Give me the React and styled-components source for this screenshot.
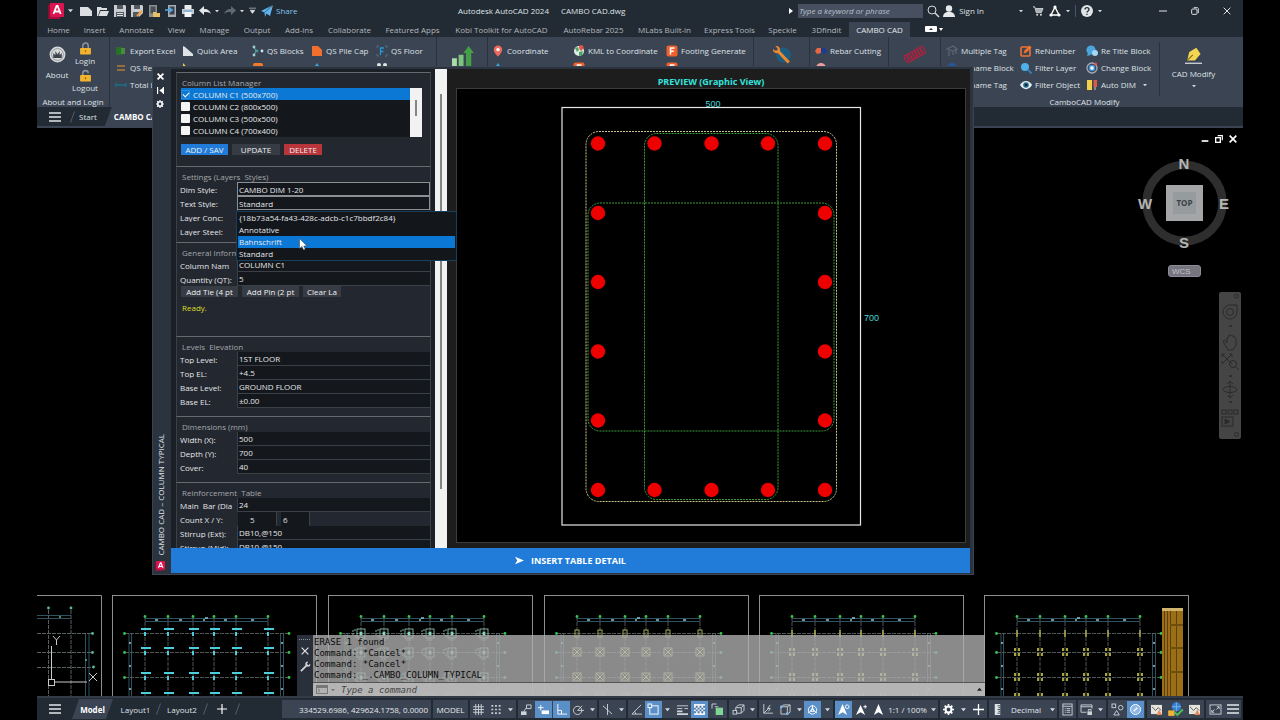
import React from "react";
import styled, { createGlobalStyle, css } from "styled-components";

const c = {
  bar: "#222a33",
  ribbon: "#3b4453",
  line: "#2a313c",
  text: "#dfe2e6",
  muted: "#b2b8bf",
  blue: "#217cd9",
  select: "#0b78d6",
  active: "#5b8fc7",
  field: "#14181d",
  group: "#23272f",
};
const ui = `"Open Sans", "Noto Sans", sans-serif`;

const Global = createGlobalStyle`
  * { box-sizing: border-box; }
  body { margin: 0; background: #000; font-family: ${ui}; font-size: 8px; color: ${c.text}; }
  button, input, select { font: inherit; color: inherit; }
`;

/* ---------- shared ---------- */
const Page = styled.div`
  position: relative;
  min-height: 100vh;
  display: flex;
  flex-direction: column;
  padding: 0 37px;
  background: #000;
`;
const Bare = styled.button`
  display: inline-flex;
  align-items: center;
  justify-content: center;
  padding: 0;
  border: 0;
  background: none;
  color: inherit;
  white-space: nowrap;
`;
const Svg = styled.svg`
  display: block;
  flex: none;
  overflow: visible;
`;
const Glyph = ({ s = 12, children, ...rest }) => (
  <Svg width={s} height={s} viewBox="0 0 12 12" fill="none" stroke="none" aria-hidden="true" {...rest}>
    {children}
  </Svg>
);
const Caret = ({ fill = "#d5d9de", s = 5 }) => (
  <Svg width={s} height={s} viewBox="0 0 6 6" aria-hidden="true">
    <path d="M0 1.5h6L3 5z" fill={fill} />
  </Svg>
);

/* ---------- title bar ---------- */
const TitleBar = styled.header`
  display: flex;
  align-items: center;
  height: 21px;
  background: ${c.bar};
`;
const QuickBar = styled.div`
  display: flex;
  align-items: center;
  width: 421px;
  padding-left: 11px;
`;
const Quick = styled(Bare)`
  width: ${(p) => p.$w || 17}px;
  height: 20px;
`;
const Account = styled(Quick)`
  justify-content: flex-end;
  padding-right: 10px;
`;
const Share = styled(Bare)`
  gap: 3px;
  margin-left: 2px;
  color: #86c4ee;
`;
const Title = styled.div`
  display: flex;
  gap: 12px;
  flex: 1;
  white-space: nowrap;
`;
const Search = styled.input`
  width: 125px;
  height: 14px;
  margin: 0 4px 0 5px;
  padding: 0 1px;
  border: 0;
  background: #465061;
  font-style: italic;
  &::placeholder { color: #b9c0c9; opacity: 1; }
`;
const TitleTools = styled.div`
  display: flex;
  align-items: center;
  flex: none;
`;
const WindowBtns = styled.div`
  display: flex;
  margin-left: 41px;
`;
const WindowBtn = styled(Bare)`
  width: 32px;
  height: 20px;
`;
const Rule = styled.span`
  width: 1px;
  height: 12px;
  margin: 0 5px;
  background: #4a5462;
`;

/* ---------- ribbon ---------- */
const Tabs = styled.nav`
  display: flex;
  align-items: flex-end;
  height: 16px;
  padding-left: 3px;
  background: ${c.bar};
`;
const Tab = styled(Bare)`
  width: ${(p) => p.$w}px;
  height: 15px;
  color: ${(p) => (p.$on ? "#e4e8ec" : c.muted)};
  background: ${(p) => (p.$on ? c.ribbon : "none")};
`;
const Ribbon = styled.section`
  display: flex;
  height: 70px;
  background: ${c.ribbon};
`;
const Panel = styled.div`
  position: relative;
  display: flex;
  flex-direction: column;
  flex: none;
  width: ${(p) => p.$w}px;
  border-right: ${(p) => (p.$last ? 0 : 1)}px solid ${c.line};
`;
const PanelBody = styled.div`
  display: flex;
  height: 59px;
  padding: 5px 0 0 ${(p) => p.$pad || 0}px;
`;
const PanelTitle = styled.div`
  height: 11px;
  line-height: 11px;
  text-align: center;
  white-space: nowrap;
`;
const Stack = styled.div`
  display: flex;
  flex-direction: column;
  width: ${(p) => p.$w}px;
`;
const Tool = styled(Bare)`
  justify-content: flex-start;
  gap: 3px;
  height: 17px;
`;
const BigTool = styled(Bare)`
  flex-direction: column;
  justify-content: flex-start;
  gap: ${(p) => p.$gap || 0}px;
  width: ${(p) => p.$w}px;
  padding-top: ${(p) => p.$top || 0}px;
  line-height: 12px;
`;
const LockTool = styled(BigTool)`
  width: 16px;
  height: 27px;
`;
const ModifyTool = styled(BigTool)`
  border-left: 1px solid ${c.line};
`;

const FileTabs = styled.nav`
  display: flex;
  align-items: center;
  height: 21px;
  border-bottom: 2px solid ${c.ribbon};
  background: ${c.bar};
`;
const FileTab = styled(Bare)`
  height: 19px;
  padding: 0 8px 0 6px;
  ${(p) => p.$on && css`
    padding: 0 14px 0 9px;
    background: ${c.ribbon};
    color: #fff;
    font-weight: 700;
    clip-path: polygon(7px 0, 100% 0, 100% 100%, 0 100%);
  `}
`;
const MenuBtn = styled(Bare)`
  width: 35px;
  height: 19px;
`;

const Lines = ({ color = "#e4e8ec" }) => (
  <Glyph><path d="M0 2h12M0 6h12M0 10h12" stroke={color} strokeWidth="1.4" /></Glyph>
);
const Slash = styled.i`
  width: 1px;
  height: 12px;
  background: #525b68;
  transform: rotate(20deg);
`;

/* ---------- drawing canvas ---------- */
const Canvas = styled.main`
  position: relative;
  flex: 1;
  min-height: 568px;
  background: #000;
  overflow: hidden;
`;
const Plans = styled.svg`
  position: absolute;
  left: 0;
  bottom: 0;
`;
const ViewTools = styled.div`
  position: absolute;
  top: 4px;
  right: 2px;
  display: flex;
  flex-direction: column;
  align-items: flex-end;
`;
const DocButtons = styled.div`
  display: flex;
  padding-right: 1px;
`;
const DocBtn = styled(Bare)`
  width: 14px;
  height: 14px;
`;
const CubeBox = styled.div`
  margin: 6px 10px 11px 0;
`;
const Wcs = styled(Bare)`
  justify-content: flex-start;
  width: 33px;
  height: 12px;
  margin-right: 40px;
  padding-left: 3px;
  border: 1px solid #8c8b9c;
  border-radius: 3px;
  background: #75747f;
  color: #c4c4cc;
  font-family: "Liberation Sans", sans-serif;
`;
const NavBar = styled.div`
  display: flex;
  flex-direction: column;
  align-items: center;
  width: 22px;
  height: 147px;
  margin-top: 15px;
  border-radius: 2px;
  background: #454545;
`;

const Command = styled.section`
  position: absolute;
  left: 260px;
  bottom: 0;
  display: flex;
  width: 688px;
  height: 61px;
`;
const CommandGrip = styled.div`
  display: flex;
  flex-direction: column;
  align-items: center;
  gap: 6px;
  width: 16px;
  padding-top: 3px;
  background: #2a303b;
`;
const CommandMain = styled.div`
  display: flex;
  flex-direction: column;
  flex: 1;
  background: rgba(172, 172, 172, 0.8);
  color: #0a0a0a;
  font-family: "DejaVu Sans Mono", "Liberation Mono", monospace;
  font-size: 9px;
`;
const History = styled.div`
  height: 48px;
  padding: 2px 1px;
  border-bottom: 1px solid #555;
  line-height: 11px;
`;
const Prompt = styled.label`
  display: flex;
  align-items: center;
  gap: 3px;
  flex: 1;
  padding: 0 3px;
  background: rgba(190, 190, 190, 0.8);
`;
const PromptInput = styled.input`
  flex: 1;
  min-width: 0;
  padding: 0 3px;
  border: 0;
  background: none;
  font-style: italic;
  &::placeholder { color: #444; opacity: 1; }
`;

/* ---------- status bar ---------- */
const Status = styled.footer`
  display: flex;
  align-items: center;
  height: 24px;
  border-top: 2px solid #323b47;
  background: ${c.bar};
`;
const LayoutTabs = styled.nav`
  display: flex;
  align-items: center;
  flex: none;
  width: 245px;
`;
const LayoutTab = styled(Bare)`
  width: ${(p) => p.$w}px;
  height: 20px;
  ${(p) => p.$on && css`
    background: ${c.ribbon};
    color: #fff;
    font-weight: 700;
    clip-path: polygon(7px 0, 100% 0, calc(100% - 7px) 100%, 0 100%);
  `}
`;
const StatusGroup = styled.div`
  display: flex;
  align-items: center;
  flex: none;
  height: 18px;
  margin-right: 2px;
  background: ${c.ribbon};
  &:last-child { margin-right: 0; }
`;
const StatusBtn = styled(Bare)`
  width: ${(p) => p.$w}px;
  height: 17px;
  background: ${(p) => (p.$on ? c.active : "none")};
  color: #e4e8ec;
`;
const Coordinates = styled(StatusBtn)`
  justify-content: flex-end;
  padding-right: 3px;
`;

/* ---------- palette ---------- */
const Palette = styled.section`
  position: absolute;
  left: 152px;
  top: 66px;
  display: flex;
  width: 822px;
  padding: 3px 4px 2px 0;
  background: #2b333f;
  box-shadow: inset 0 0 0 1px #3a4350;
`;
const PaletteStrip = styled.div`
  display: flex;
  flex-direction: column;
  align-items: center;
  width: 19px;
`;
const StripBtn = styled(Bare)`
  width: 14px;
  height: 14px;
  margin-left: -3px;
`;
const PaletteName = styled.div`
  margin: auto 0 3px -2px;
  writing-mode: vertical-rl;
  transform: rotate(180deg);
  line-height: 12px;
  white-space: nowrap;
`;
const PaletteBody = styled.div`
  position: relative;
  display: flex;
  flex-direction: column;
  flex: 1;
  background: #1a1d22;
`;
const Columns = styled.div`
  display: flex;
  height: 479px;
`;
const Form = styled.form`
  width: 264px;
  padding: 3px 4px 0 5px;
  overflow: hidden;
  background: #1b2027;
`;
const Group = styled.fieldset`
  height: ${(p) => p.$h}px;
  min-width: 0;
  margin: 0;
  padding: 0;
  border: 1px solid #3b3f46;
  border-top-color: #666a70;
  border-bottom: 0;
  background: ${c.group};
`;
const Legend = styled.div`
  height: 15px;
  padding-left: 5px;
  line-height: 20px;
  color: #a4a8ad;
  white-space: nowrap;
`;
const List = styled.div`
  display: flex;
  height: 49px;
  margin: 0 8px 7px 4px;
  background: ${c.field};
`;
const ListItems = styled.div`
  flex: 1;
`;
const ListItem = styled.label`
  display: flex;
  align-items: center;
  gap: 3px;
  height: 12px;
  color: #e6e8ea;
  background: ${(p) => (p.$on ? c.select : "none")};
`;
const Check = styled.input`
  appearance: none;
  width: 9px;
  height: 9px;
  margin: 0;
  border-radius: 1px;
  background: #f4f4f4;
  &:checked {
    background: ${c.select};
    border: 1px solid #2f8de0;
  }
  &:checked::after {
    content: "";
    display: block;
    width: 5px;
    height: 3px;
    margin: 1px;
    border-left: 1px solid #fff;
    border-bottom: 1px solid #fff;
    transform: rotate(-45deg);
  }
`;
const ScrollTrack = styled.div`
  display: flex;
  justify-content: center;
  flex: none;
  width: 12px;
  padding: ${(p) => p.$top}px 0 ${(p) => p.$bottom}px;
  background: #f2f2f2;
  &::after {
    content: "";
    width: 2px;
    background: #858585;
  }
`;
const ButtonRow = styled.div`
  display: flex;
  gap: 4px;
  margin-left: 4px;
`;
const Action = styled(Bare)`
  width: ${(p) => p.$w}px;
  height: 11px;
  background: ${(p) => p.$bg || "#363b44"};
  color: #eef0f2;
  line-height: 11px;
`;
const Row = styled.div`
  display: flex;
  align-items: center;
  height: 14px;
  padding-left: 3px;
`;
const RowLabel = styled.label`
  width: 57px;
  height: 10px;
  overflow: hidden;
  line-height: 12px;
  color: #e4e6e9;
  white-space: nowrap;
`;
const fieldCss = css`
  flex: 1;
  min-width: 0;
  height: 14px;
  padding: 0 1px;
  border: 1px solid #3b4047;
  border-top-width: 0;
  border-right: 0;
  border-radius: 0;
  background: ${c.field};
  color: #e4e6e9;
  outline: 0;
`;
const Field = styled.input`${fieldCss}`;
const Choice = styled.select`
  ${fieldCss}
  appearance: none;
  border: 1px solid #8b8f94;
`;
const Counts = styled.div`
  display: flex;
  gap: 4px;
  flex: 1;
  padding-left: 1px;
`;
const Count = styled.input`
  width: ${(p) => p.$w}px;
  height: 14px;
  padding: 0 0 0 ${(p) => p.$pad}px;
  border: 0;
  border-right: 1px solid #3b4047;
  background: ${c.field};
`;
const Ready = styled.p`
  margin: 5px 0 0 5px;
  line-height: 12px;
  color: #dddc2a;
`;
const Preview = styled.div`
  display: flex;
  flex-direction: column;
  flex: 1;
  padding: 0 4px 5px 9px;
  background: #1d1d1e;
`;
const PreviewTitle = styled.h2`
  margin: 0;
  padding: 6px 0 0;
  font-size: 9px;
  line-height: 13px;
  text-align: center;
  color: #35e3dc;
`;
const PreviewCanvas = styled.div`
  flex: 1;
  min-height: 0;
  border: 1px solid #3c3c3c;
  background: #000;
`;
const SectionSvg = styled.svg`
  display: block;
`;
const Insert = styled(Bare)`
  gap: 7px;
  height: 25px;
  background: ${c.blue};
  color: #fff;
  font-size: 9px;
  font-weight: 700;
`;
const Options = styled.ul`
  position: absolute;
  left: 66px;
  top: 143px;
  width: 219px;
  margin: 0;
  padding: 0 1px;
  list-style: none;
  background: #13171c;
  box-shadow: 0 0 0 1px #17405f;
`;
const Option = styled.li`
  height: 12px;
  padding-left: 1px;
  line-height: 12px;
  color: #e4e6e9;
  background: ${(p) => (p.$on ? c.select : "none")};
`;
const Pointer = styled.svg`
  position: absolute;
  left: 128px;
  top: 169px;
`;

/* ---------- data ---------- */
const tabs = [
  ["Home", 37], ["Insert", 35], ["Annotate", 49], ["View", 31], ["Manage", 45], ["Output", 40],
  ["Add-ins", 44], ["Collaborate", 57], ["Featured Apps", 69], ["Kobi Toolkit for AutoCAD", 109],
  ["AutoRebar 2025", 75], ["MLabs Built-in", 67], ["Express Tools", 63], ["Speckle", 43],
  ["3Dfindit", 45], ["CAMBO CAD", 61],
];

const art = {
  excel: <><rect x="1" y="2" width="6" height="8" fill="#2d6b2a" /><rect x="6" y="3" width="4" height="6" fill="#4c8a3c" /><path d="M2.500 4l3 4M5.500 4l-3 4" stroke="#182" /></>,
  rebar: <path d="M2 4h8M2 8h8" stroke="#b67a3a" strokeWidth="1.400" />,
  length: <path d="M1 6h10M1 4v4M11 4v4" stroke="#1d6f86" strokeWidth="1.300" />,
  area: <path d="M1 1l2 1 8 7v2H1z" fill="#dfe3e6" />,
  area2: <path d="M1 1l9 10H1z" fill="#e8d24c" />,
  blocks: <><path d="M2 2l2 4-2 4" stroke="#6aa" /><circle cx="2" cy="2" r="1.400" fill="#9ed0d6" /><circle cx="2" cy="10" r="1.400" fill="#9ed0d6" /><circle cx="5" cy="6" r="1.400" fill="#3f9aa8" /><circle cx="10" cy="6" r="1.400" fill="#cfe6ea" /></>,
  orangeTop: <rect x="1" y="1" width="10" height="10" rx="2" fill="#f07c2b" />,
  pile: <path d="M1 1h6l4 4v6H1z" fill="#f2702c" />,
  drop: <path d="M6 1l4 6a4 4 0 1 1-8 0z" fill="#38a3e0" />,
  floor: <><path d="M1 3V1h2M9 1h2v2M1 9v2h2M9 11h2V9" stroke="#4d7088" /><path d="M4.500 10V3H8M4.500 6.500h3" stroke="#2796d8" strokeWidth="1.300" /></>,
  calc: <><circle cx="3" cy="3" r="2" fill="#e4e4e4" /><circle cx="9" cy="3" r="2" fill="#e4e4e4" /><rect x="2" y="6" width="8" height="5" fill="#889" /></>,
  pin: <><path d="M6 .5a4.200 4.200 0 0 1 4.200 4.200C10.200 7.500 6 11.500 6 11.500S1.800 7.500 1.800 4.700A4.200 4.200 0 0 1 6 .5z" fill="#ee6a5c" /><circle cx="6" cy="4.600" r="1.700" fill="#fff" /></>,
  globe: <><circle cx="6" cy="6" r="5" fill="#dfeee2" /><path d="M2 3l3-1 1 3-2 2zM6 7l4-1-1 4-3 1z" fill="#4aa561" /><path d="M8 0a2.500 2.500 0 0 1 2.500 2.500C10.500 4 8 6 8 6S6 4 6 2.500A2.300 2.300 0 0 1 8 0z" fill="#e8524a" /></>,
  footing: <><rect x=".5" y=".5" width="11" height="11" rx="2" fill="#f0602c" /><path d="M4.500 9.500V3h4M4.500 6.200h3.300" stroke="#fff" strokeWidth="1.500" /></>,
  cutting: <><path d="M0 6l2-3h4v5l-4 1z" fill="#e8663c" /><path d="M6 3h4l2 3-2 3-4-1z" fill="#173b96" /></>,
  rrebar: <circle cx="6" cy="6" r="5" fill="#ee9d9d" />,
  tag: <><path d="M1 4l6-3 4 3-4 2zM3 6v5M7 6v4M10 5v4" stroke="#5c6573" strokeWidth="1.300" /></>,
  rename: <><circle cx="6" cy="6" r="5" fill="#24579c" /><path d="M3 6h6" stroke="#9cf" /></>,
  renumber: <><rect x="1" y="2" width="9" height="9" rx="1" stroke="#ef7430" strokeWidth="1.600" /><path d="M3.500 8.500l1-3L9.500.5l2 2-5 5z" fill="#ef7430" /></>,
  filter: <><circle cx="5" cy="5" r="4" fill="#4fb0e8" /><path d="M8 8l3.500 3.500" stroke="#337fb8" strokeWidth="2" /></>,
  eye: <><path d="M0 6c3-5.500 9-5.500 12 0-3 5.500-9 5.500-12 0z" fill="#e6eef2" /><circle cx="6" cy="6" r="2.800" fill="#1e6c8f" /><circle cx="6" cy="6" r="1.200" fill="#0c1c26" /></>,
  chat: <><circle cx="5" cy="5" r="4.600" fill="#4ba6df" /><circle cx="9" cy="8" r="3" fill="#a7d8f3" /><path d="M2 8L1 11l4-1z" fill="#4ba6df" /></>,
  change: <><circle cx="6" cy="6" r="5" stroke="#a5acb8" strokeWidth="1.300" /><circle cx="6" cy="6" r="2.600" fill="#dff1ff" stroke="#3b8ed4" strokeWidth="1.400" /><circle cx="9.500" cy="2" r="1.600" fill="#e0554b" /></>,
  dim: <><rect x="1" y="1" width="5" height="10" fill="#f2d04a" /><rect x="7.500" y="1" width="3.500" height="7" fill="#de5b45" /><path d="M9 8v3" stroke="#ccc" /></>,
};

const T = ({ icon, children }) => (
  <Tool type="button"><Glyph>{art[icon]}</Glyph>{children}</Tool>
);
const Lock = ({ open }) => (
  <Glyph s={13}>
    <path d={open ? "M3.500 6V4a2.500 2.500 0 0 1 5 0" : "M3.500 6V3.500a2.500 2.500 0 0 1 5 0V6"} stroke="#8e9299" strokeWidth="1.400" />
    <rect x="1" y="5.500" width="10" height="6" rx=".6" fill="#f2b42e" />
    <path d="M6 7.500v2" stroke="#a66c12" strokeWidth="1.200" />
  </Glyph>
);

function Logo({ s = 16 }) {
  return (
    <Svg width={s} height={s} viewBox="0 0 16 16" aria-label="AutoCAD">
      <path d="M0 2L3 0v14l-3 2z" fill="#8d0c35" />
      <rect x="2" y="0" width="14" height="14" rx="1" fill="#dc1450" />
      <path d="M5.500 11L8.600 3h1L12.700 11M6.800 8.500h4.600" stroke="#fff" strokeWidth="1.800" fill="none" />
      <path d="M0 16l2-2h10v2z" fill="#a80d3d" />
    </Svg>
  );
}

const quick = [
  ["New", <path d="M0 2h8l4 4v5H0z" fill="#dcdfe2" />],
  ["Open", <path d="M0 2h4l1 1h5v2H3L1 11H0zM3.500 6H12l-2 5H1.500z" fill="#dcdfe2" />],
  ["Save", <><path d="M0 0h11l1 1v11H0z" fill="#c9cdd1" /><path d="M3 0h6v4H3zM2 7h8v5H2z" fill="#51585f" /><path d="M3 8.500h6M3 10.500h6" stroke="#dcdfe2" /></>],
  ["Save As", <><path d="M0 0h11l1 1v7l-4 4H0z" fill="#c9cdd1" /><path d="M3 0h6v4H3zM2 7h6v5H2z" fill="#51585f" /><path d="M6 11l5-5" stroke="#f0a13a" strokeWidth="2" /></>],
  ["Open from Web", <><path d="M1 0h8v12H1z" fill="#8b8f92" /><path d="M2.500 1.500h5v7h-5z" fill="#4b5056" /><path d="M5 7h3l1 1h3v4H5z" fill="#eac067" /></>],
  ["Save to Web", <><path d="M3 0h8v12H3z" fill="#a7acb1" /><path d="M4.500 1.500h5v8h-5z" fill="#39424c" /><path d="M0 5h6M4 2.500L7 5 4 7.500" stroke="#53a9e6" strokeWidth="1.600" /></>],
  ["Plot", <><path d="M2.500 0h7v4h-7z" fill="#e9ecef" /><path d="M0 4h12v5H0z" fill="#c9cdd1" /><path d="M2.500 7h7v5h-7z" fill="#f3f5f6" /><path d="M1.500 6h9" stroke="#4d9fe0" /></>],
];

function TopBar() {
  return (
    <TitleBar>
      <QuickBar>
        <Quick type="button" $w={16} aria-label="Application menu"><Logo /></Quick>
        <Quick type="button" $w={13} aria-label="More"><Caret /></Quick>
        {quick.map(([name, g]) => (
          <Quick key={name} type="button" aria-label={name}><Glyph>{g}</Glyph></Quick>
        ))}
        <Quick type="button" aria-label="Undo"><Glyph><path d="M5 1v3c4 0 6 2 7 5-2-2-4-2-7-2v3L0 5.500z" fill="#e4e7ea" /></Glyph></Quick>
        <Quick type="button" $w={8} aria-label="Undo list"><Caret s={4} /></Quick>
        <Quick type="button" aria-label="Redo"><Glyph><path d="M7 1v3C3 4 1 6 0 9c2-2 4-2 7-2v3l5-4.500z" fill="#606973" /></Glyph></Quick>
        <Quick type="button" $w={8} aria-label="Redo list"><Caret s={4} /></Quick>
        <Quick type="button" $w={13} aria-label="Customize"><Glyph s={7}><path d="M0 2h12M2 5.500h8L6 11z" stroke="#e4e7ea" fill="#e4e7ea" /></Glyph></Quick>
        <Share type="button"><Glyph><path d="M0 6L12 0 9 11 5.500 8.500 4 12 3.500 7.500z" fill="#5fb4ee" /><path d="M3.500 7.500L12 0" stroke="#222a33" strokeWidth=".6" /></Glyph>Share</Share>
      </QuickBar>
      <Title><span>Autodesk AutoCAD 2024</span><span>CAMBO CAD.dwg</span></Title>
      <TitleTools>
        <Svg width="4" height="6" viewBox="0 0 4 6"><path d="M0 0l4 3-4 3z" fill="#fff" /></Svg>
        <Search aria-label="Search" placeholder="Type a keyword or phrase" />
        <Bare type="button" aria-label="Find"><Glyph><circle cx="5" cy="5" r="4" stroke="#d5d9de" /><path d="M8 8l4 4" stroke="#d5d9de" strokeWidth="1.400" /></Glyph></Bare>
        <Quick type="button" $w={20} aria-label="User"><Glyph><circle cx="6" cy="3.500" r="3.200" fill="#e6e9ec" /><path d="M0 12c0-7 12-7 12 0z" fill="#e6e9ec" /></Glyph></Quick>
        <Bare type="button">Sign In</Bare>
        <Account type="button" $w={49} aria-label="Account"><Caret s={4} /></Account>
        <Bare type="button" aria-label="Cart"><Glyph s={10}><path d="M0 1h2l2 7h6l2-5H3" fill="#a9afb7" stroke="#d5d9de" /><circle cx="5" cy="10.500" r="1.200" fill="#ddd" /><circle cx="9.500" cy="10.500" r="1.200" fill="#ddd" /></Glyph></Bare>
        <Quick type="button" $w={23} aria-label="Apps"><Glyph><path d="M6 2l4 8H2z" stroke="#fff" strokeWidth="1.400" /><circle cx="6" cy="2" r="1.600" fill="#fff" /><circle cx="2" cy="10" r="1.600" fill="#fff" /><circle cx="10" cy="10" r="1.600" fill="#fff" /></Glyph></Quick>
        <Caret s={4} /><Rule />
        <Bare type="button" aria-label="Help"><Glyph><circle cx="6" cy="6" r="6" fill="#e1e4e7" /><path d="M4 4.500c0-2.500 4-2.500 4 0C8 6 6 6 6 7.500M6 8.800V10" stroke="#222a33" strokeWidth="1.300" /></Glyph></Bare>
        <Quick type="button" $w={13} aria-label="Help menu"><Caret s={4} /></Quick>
        <WindowBtns>
          <WindowBtn type="button" aria-label="Minimize"><Glyph s={8}><path d="M0 6h12" stroke="#dfe3e6" strokeWidth="1.500" /></Glyph></WindowBtn>
          <WindowBtn type="button" aria-label="Restore"><Glyph s={8}><rect x="1" y="3" width="8" height="8" rx="1.500" stroke="#dfe3e6" strokeWidth="1.500" /><path d="M4 1h6l1 1v7" stroke="#dfe3e6" strokeWidth="1.400" /></Glyph></WindowBtn>
          <WindowBtn type="button" aria-label="Close"><Glyph s={8}><path d="M1 1l10 10M11 1L1 11" stroke="#dfe3e6" strokeWidth="1.500" /></Glyph></WindowBtn>
        </WindowBtns>
      </TitleTools>
    </TitleBar>
  );
}

function RibbonArea() {
  return (
    <>
      <Tabs>
        {tabs.map(([t, w]) => <Tab key={t} type="button" $w={w} $on={t === "CAMBO CAD"}>{t}</Tab>)}
        <Tab type="button" $w={48} aria-label="Ribbon display">
          <Svg width="18" height="7" viewBox="0 0 18 7"><rect width="12" height="6" rx="1" fill="#fff" /><path d="M4 4h4L6 2z" fill="#222a33" /><path d="M14 2h4l-2 3z" fill="#fff" /></Svg>
        </Tab>
      </Tabs>
      <Ribbon>
        <Panel $w={73}>
          <PanelBody>
            <BigTool type="button" $w={40} $top={4} $gap={6}>
              <Glyph s={17}><circle cx="6" cy="6" r="5.600" fill="#d6d8da" /><circle cx="6" cy="6" r="4.200" stroke="#8b9096" strokeWidth=".6" /><path d="M3 8.500V5l1.500 1.500V3.500L6 6l1.500-2.500v3L9 5v3.500z" fill="#3d444e" /></Glyph>
              About
            </BigTool>
            <Stack $w={16}>
              <LockTool type="button"><Lock />Login</LockTool>
              <LockTool type="button"><Lock open />Logout</LockTool>
            </Stack>
          </PanelBody>
          <PanelTitle>About and Login</PanelTitle>
        </Panel>
        <Panel $w={327}>
          <PanelBody $pad={5}>
            <Stack $w={67}><T icon="excel">Export Excel</T><T icon="rebar">QS Rebar</T><T icon="length">Total Length</T></Stack>
            <Stack $w={70}><T icon="area">Quick Area</T><T icon="area2">Total Area</T></Stack>
            <Stack $w={59}><T icon="blocks">QS Blocks</T><T icon="orangeTop">Total Block</T></Stack>
            <Stack $w={65}><T icon="pile">QS Pile Cap</T><T icon="drop">QS Column</T></Stack>
            <Stack $w={55}><T icon="floor">QS Floor</T><T icon="calc">Calculator</T></Stack>
          </PanelBody>
        </Panel>
        <Panel $w={51}>
          <PanelBody>
            <BigTool type="button" $w={50} $top={4} aria-label="Report">
              <Glyph s={21}><rect x="0" y="7" width="2.800" height="5" fill="#a9dca8" /><rect x="3.800" y="5" width="2.800" height="7" fill="#7cc47c" /><path d="M8 12V4H6.500L9.500 0l3 4H11v8z" fill="#43a047" /></Glyph>
            </BigTool>
          </PanelBody>
        </Panel>
        <Panel $w={266}>
          <PanelBody $pad={4}>
            <Stack $w={81}><T icon="pin">Coordinate</T><T icon="drop">Geo Coordinate</T></Stack>
            <Stack $w={93}><T icon="globe">KML to Coordinate</T><T icon="footing">Generate Boundary</T></Stack>
            <Stack $w={85}><T icon="footing">Footing Generate</T><T icon="footing">Road Generate</T></Stack>
          </PanelBody>
        </Panel>
        <Panel $w={56}>
          <PanelBody>
            <BigTool type="button" $w={55} $top={4} aria-label="Tools">
              <Glyph s={18}><circle cx="7" cy="6" r="5" fill="#1d5d80" /><path d="M3 3l7.500 8" stroke="#ef8a2f" strokeWidth="2" /><path d="M1.500 0L3 1.500v1.500H1.200L0 1.800C-.3 4 1.500 5.200 3.200 4.600L4.600 3C5 1 3.500-.4 1.500 0z" fill="#ef8a2f" /></Glyph>
            </BigTool>
          </PanelBody>
        </Panel>
        <Panel $w={79}>
          <PanelBody $pad={5}>
            <Stack $w={72}><T icon="cutting">Rebar Cutting</T><T icon="rrebar">R Rebar</T></Stack>
          </PanelBody>
        </Panel>
        <Panel $w={52}>
          <PanelBody>
            <BigTool type="button" $w={51} $top={2} aria-label="Rebar spiral">
              <Svg width="24" height="20" viewBox="0 0 24 20" fill="none" stroke="#b0213f" strokeWidth="1.300">
                {[0, 1, 2, 3, 4, 5, 6].map((i) => <ellipse key={i} cx={4 + i * 2.6} cy={15 - i * 1.5} rx="1.800" ry="4" transform={`rotate(-30 ${4 + i * 2.6} ${15 - i * 1.5})`} />)}
              </Svg>
            </BigTool>
          </PanelBody>
        </Panel>
        <Panel $w={287} $last>
          <PanelBody $pad={5}>
            <Stack $w={74}><T icon="tag">Multiple Tag</T><T icon="rename">Rename Block</T><T icon="rename">Rename Tag</T></Stack>
            <Stack $w={66}><T icon="renumber">ReNumber</T><T icon="filter">Filter Layer</T><T icon="eye">Filter Object</T></Stack>
            <Stack $w={73}>
              <T icon="chat">Re Title Block</T><T icon="change">Change Block</T>
              <Tool type="button"><Glyph>{art.dim}</Glyph>Auto DIM&nbsp;&nbsp;<Caret s={4} /></Tool>
            </Stack>
            <ModifyTool type="button" $w={68} $top={5} $gap={4}>
              <Glyph s={17}><path d="M1.500 9.500L3 3.500 8 .5l3 4.500-4 4.500z" fill="#f4d652" /><path d="M1.500 9.500l4-4" stroke="#7c6a1c" strokeWidth=".8" /><path d="M0 11.500h12" stroke="#c6cbd0" /></Glyph>
              CAD Modify
              <Caret s={4} />
            </ModifyTool>
          </PanelBody>
          <PanelTitle>CamboCAD Modify</PanelTitle>
        </Panel>
      </Ribbon>
      <FileTabs>
        <MenuBtn type="button" aria-label="File tab menu"><Lines /></MenuBtn>
        <Slash />
        <FileTab type="button">Start</FileTab>
        <FileTab type="button" $on>CAMBO CAD*</FileTab>
      </FileTabs>
    </>
  );
}

/* ---------- floor plan thumbnails ---------- */
const colX = [33, 56, 81, 102, 124, 156];
const rowY = [633, 652, 677, 697];

function Marker({ kind, x, y, top }) {
  if (kind === "beam") return <g fill="#4ccfdc"><rect x={x - 4} y={y - 5} width="10" height="2" /><rect x={x - 1} y={y - 1} width="2" height="4" /></g>;
  if (kind === "pad") return (
    <g stroke="#9fd6bf" fill="none" strokeWidth=".8">
      <rect x={x - 4} y={y - 4} width="8" height="9" /><rect x={x - 1} y={y - 1} width="2" height="3" fill="#5fe0b0" />
      <path d={`M${x - 8} ${y - 3}v6M${x - 7} ${y - 3}h2M${x - 7} ${y + 3}h2M${x - 3} ${y + 7}h6`} strokeDasharray="2 1" />
    </g>
  );
  if (kind === "cross") return top
    ? <rect x={x - 2} y={y - 3} width="4" height="7" fill="none" stroke="#a4a552" />
    : <g stroke="#f0f08c" fill="none"><rect x={x - 4} y={y - 4} width="8" height="8" strokeWidth=".8" /><path d={`M${x - 3} ${y - 3}l6 6M${x + 3} ${y - 3}l-6 6`} /></g>;
  return top
    ? <path d={`M${x} ${y - 3}v7`} stroke="#b9b24a" strokeWidth="1.500" />
    : <path d={`M${x - 2} ${y - 4}v3M${x + 2} ${y - 4}v3M${x - 2} ${y + 1}v3M${x + 2} ${y + 1}v3`} stroke={kind === "faint" ? "#d8d67c" : "#bcb740"} strokeWidth="1.800" />;
}

function Plan({ x, kind }) {
  return (
    <g transform={`translate(${x} 0)`}>
      <rect x=".5" y="595.5" width="204" height="130" fill="none" stroke="#8f8f8f" />
      <path d="M33 618.500h123M33 621.500h123M17 633v70M19.500 633v70M168.500 633v70M171.500 633v70" stroke="#3b6675" strokeWidth=".8" fill="none" />
      <path d="M43 620h3M67 620h3M91 620h2M112 620h3M139 620h3M93 618h3" stroke="#8fc1d0" strokeWidth="1.500" />
      <path d="M18 642v2M18 665v2M18 688v2M170 642v2M170 665v2M170 688v2" stroke="#a6c4cc" strokeWidth="1.500" />
      <g stroke="#57615f" strokeWidth=".9" strokeDasharray="4 1">
        {colX.map((cx) => <path key={cx} d={`M${cx} 617V700`} />)}
        {rowY.map((cy) => <path key={cy} d={`M13 ${cy}.5H177`} />)}
      </g>
      <g fill="#37c44d">
        {colX.map((cx) => <circle key={cx} cx={cx} cy="616.5" r="1.400" />)}
        {rowY.slice(0, 3).map((cy) => <g key={cy}><circle cx="12.500" cy={cy + 0.5} r="1.400" /><circle cx="177" cy={cy + 0.5} r="1.400" /></g>)}
      </g>
      {rowY.map((cy, r) => colX.map((cx) => <Marker key={`${cx}-${cy}`} kind={kind} x={cx} y={cy} top={r === 0} />))}
    </g>
  );
}

function PlansDrawing() {
  return (
    <Plans width="1206" height="106" viewBox="37 590 1206 106" aria-label="Floor plans">
      <path d="M37 595.5h64.500V700" fill="none" stroke="#8f8f8f" />
      <path d="M37 615.500h34M37 618.500h34M85.500 633v70M89 633v70" stroke="#3b6675" strokeWidth=".8" />
      <path d="M48.500 610V700M71 610V700M37 633.500h56M37 652.500h56M37 667.500h56" stroke="#57615f" strokeDasharray="4 1" />
      <g fill="#5b9"><circle cx="48.500" cy="608" r="1.400" /><circle cx="71" cy="608" r="1.400" /><circle cx="92.500" cy="633.500" r="1.400" /><circle cx="92.500" cy="652.500" r="1.400" /><circle cx="93.500" cy="667" r="1.400" /><circle cx="60" cy="617" r="1" /><circle cx="86" cy="660" r="1" /></g>
      <Plan x={112} kind="beam" />
      <Plan x={328} kind="pad" />
      <Plan x={544} kind="cross" />
      <Plan x={759} kind="faint" />
      <Plan x={984} kind="dots" />
      <g>
        <rect x="1162" y="608" width="21" height="92" fill="#9a6f18" />
        <rect x="1162" y="608" width="21" height="3" fill="#d1b36b" />
        <path d="M1164.500 611v90M1167.500 611v90M1170.500 611v90M1176.500 611v90" stroke="#5c410b" />
        <path d="M1170 625h13M1170 648h13M1170 672h13" stroke="#6f4d0d" strokeWidth="2" />
      </g>
      <g stroke="#c9c9c9" fill="none">
        <path d="M51.500 646v33M54 682h33" /><rect x="48.500" y="679.500" width="6" height="6" />
        <path d="M53 636l3.500 4 3.500-4M56.500 640v5M89 673l8 8M97 673l-8 8" />
      </g>
    </Plans>
  );
}

function ViewCube() {
  return (
    <Svg width="94" height="102" viewBox="1137 152 94 102" aria-label="View cube">
      <circle cx="1184.500" cy="203" r="38" fill="none" stroke="#2e2e2e" strokeWidth="8.500" />
      <rect x="1166" y="185" width="37" height="36" fill="#a3a5a6" />
      <rect x="1173" y="192" width="23" height="22" fill="#969b9d" />
      <g fontFamily="Liberation Sans, sans-serif" fontWeight="700" textAnchor="middle" fill="#b5b5b5" fontSize="15">
        <text x="1184" y="169">N</text><text x="1184" y="248">S</text><text x="1145" y="209">W</text><text x="1224" y="209">E</text>
        <text x="1184.500" y="206" fontSize="8" fontFamily="Open Sans, sans-serif" fill="#3b4045">TOP</text>
      </g>
    </Svg>
  );
}

function NavIcons() {
  return (
    <Svg width="22" height="147" viewBox="1219 292 22 147" fill="none" stroke="#2a2a2a" aria-label="Navigation tools">
      <circle cx="1236.500" cy="296" r="2" />
      <path d="M1237 305v7a7 7 0 1 1-7-7z" /><circle cx="1230" cy="312" r="3.500" />
      <path d="M1229 326h3M1229 376h3M1229 402h3" strokeWidth="1.500" />
      <path d="M1225 345l-2-4 2-1 2 3v-5l2-1v-2l2 0 1 1 2 0 1 2 1 1v6l-3 5h-5z" />
      <path d="M1222 354l10 10M1232 354l-10 10M1222 357v-3h3M1229 354h3v3M1222 361v3" /><circle cx="1233" cy="364" r="3.500" /><path d="M1236 367l3 3" />
      <path d="M1230 381v17M1227 384l3-3 3 3M1227 395l3 3 3-3" /><ellipse cx="1230" cy="389.500" rx="7" ry="3" />
      <rect x="1222" y="410" width="4" height="4" /><rect x="1228" y="410" width="4" height="4" /><rect x="1234" y="410" width="4" height="4" />
      <rect x="1222" y="417" width="11" height="9" /><path d="M1225 419l5 2.500-5 2.500z" fill="#2a2a2a" />
      <circle cx="1236.500" cy="434.500" r="2" />
    </Svg>
  );
}

function Workspace() {
  return (
    <Canvas>
      <PlansDrawing />
      <ViewTools>
        <DocButtons>
          <DocBtn type="button" aria-label="Minimize drawing"><Glyph s={8}><path d="M1 9h10" stroke="#fff" strokeWidth="2.500" /></Glyph></DocBtn>
          <DocBtn type="button" aria-label="Restore drawing"><Glyph s={8}><rect x="1" y="4" width="7" height="7" stroke="#fff" strokeWidth="2" /><path d="M4 1h7v7" stroke="#fff" strokeWidth="1.800" /></Glyph></DocBtn>
          <DocBtn type="button" aria-label="Close drawing"><Glyph s={8}><path d="M1 1l10 10M11 1L1 11" stroke="#fff" strokeWidth="2.500" /></Glyph></DocBtn>
        </DocButtons>
        <CubeBox><ViewCube /></CubeBox>
        <Wcs type="button">WCS</Wcs>
        <NavBar><NavIcons /></NavBar>
      </ViewTools>
      <Command>
        <CommandGrip>
          <Svg width="12" height="3" viewBox="0 0 12 3"><path d="M0 1.500h12" stroke="#8a919b" strokeDasharray="1 1" /></Svg>
          <Bare type="button" aria-label="Close command line"><Glyph s={8}><path d="M1 1l10 10M11 1L1 11" stroke="#dfe3e6" strokeWidth="1.800" /></Glyph></Bare>
          <Bare type="button" aria-label="Customize"><Glyph s={11}><path d="M1 11l6-6" stroke="#cfd3d8" strokeWidth="2" /><path d="M11 3L9 4.500 7.500 3 9 1C6 0 5 3 6.500 5.500 9 7 12 6 11 3z" fill="#cfd3d8" /></Glyph></Bare>
        </CommandGrip>
        <CommandMain>
          <History>
            <div>ERASE 1 found</div><div>Command: *Cancel*</div><div>Command: *Cancel*</div><div>Command: _.CAMBO_COLUMN_TYPICAL</div>
          </History>
          <Prompt>
            <Svg width="12" height="9" viewBox="0 0 12 9" fill="none" stroke="#777"><rect x=".5" y=".5" width="11" height="8" /><path d="M.5 2h11" strokeWidth="2" /><path d="M2 4l2 1.500L2 7" /></Svg>
            <Caret fill="#777" s={4} />
            <PromptInput aria-label="Command" placeholder="Type a command" />
            <Svg width="5" height="5" viewBox="0 0 6 6"><path d="M0 4.500h6L3 1z" fill="#222" /></Svg>
          </Prompt>
        </CommandMain>
      </Command>
    </Canvas>
  );
}

/* ---------- status icons ---------- */
const L = "#cdd2d8";
const st = {
  grid: <path d="M3 0v12M6 0v12M9 0v12M0 3h12M0 6h12M0 9h12" stroke={L} />,
  dots: <path d="M1.500 2h10M1.500 6h10M1.500 10h10" stroke={L} strokeWidth="1.800" strokeDasharray="2 2" />,
  infer: <><path d="M6 1h5v4H6zM6 4L3 8" stroke={L} /><path d="M0 8h6v4H0z" fill={L} /></>,
  dyn: <><path d="M0 4h6M3 1v6" stroke="#fff" /><path d="M4 7h8v4H4z" fill="#fff" /></>,
  ortho: <path d="M2 0v11h10M2 7h4v4" stroke="#fff" />,
  polar: <><circle cx="5" cy="7" r="4.500" stroke={L} /><path d="M5 7h7M5 7l5-5" stroke={L} /></>,
  iso: <><path d="M6 0v12M1 2l10 9" stroke={L} /></>,
  track: <path d="M11 1L1 11h11M5 11a5 5 0 0 0-1-3" stroke={L} />,
  snap: <><rect x="2" y="2" width="9" height="9" stroke="#fff" /><rect x="0" y="0" width="4" height="4" fill="#5b8fc7" stroke="#fff" /></>,
  lwt: <><path d="M0 2h12M0 5h6M8 5h4" stroke={L} /><path d="M0 8h6M0 11h12" stroke={L} strokeWidth="2" /></>,
  checker: <><rect width="12" height="12" fill="#eef2f6" /><path d="M2 2h2v2H2zM6 2h2v2H6zM10 2h2v2h-2zM0 4h2v2H0zM4 4h2v2H4zM8 4h2v2H8zM2 6h2v2H2zM6 6h2v2H6zM10 6h2v2h-2zM4 8h2v2H4zM8 8h2v2H8zM0 8h2v2H0z" fill="#4a78a8" /></>,
  cycle: <><path d="M0 0h5M0 0v5M3 3h4" stroke={L} /><rect x="4" y="4" width="8" height="8" fill="#7fd694" /></>,
  box3: <><path d="M3 4h6v6H3zM3 4l3-3h6v6l-3 3M9 4l3-3" stroke={L} /><rect x="0" y="7" width="4" height="4" fill="#3b4453" stroke={L} /></>,
  ucs: <path d="M2 0v10h10M2 10l6-6M9 1l-3 4h3l-2 3" stroke={L} />,
  filt: <><path d="M1 3h7v8H1zM1 3l3-2h7v8l-3 2M8 3l3-2" stroke={L} /><circle cx="1.500" cy="3" r="1.500" fill="#7db6ee" /><circle cx="8" cy="10.500" r="1.500" fill="#7db6ee" /></>,
  gizmo: <><circle cx="6" cy="6.500" r="4.500" stroke="#fff" /><path d="M6 1v5l-5 4M6 6l5 4M4 8l2-4 2 4z" stroke="#fff" /></>,
  ann1: <><path d="M5 0l5 12-5-3-5 3z" fill="#fff" /><circle cx="10" cy="3" r="2" stroke="#fff" /></>,
  ann2: <><path d="M5 1l5 11-5-3-5 3z" fill="#fff" /><path d="M8 3h4M10 1v4" stroke="#fff" /></>,
  ann3: <path d="M6 0l5 12-5-3-5 3z" fill="#fff" />,
  gear: <><circle cx="6" cy="6" r="3.300" stroke="#fff" strokeWidth="2.400" /><path d="M6 0v2M6 10v2M0 6h2M10 6h2M1.800 1.800l1.400 1.400M8.800 8.800l1.400 1.400M1.800 10.200l1.400-1.400M8.800 3.200l1.400-1.400" stroke="#fff" strokeWidth="1.800" /></>,
  plus: <path d="M6 0v12M0 6h12" stroke="#fff" strokeWidth="1.400" />,
  ruler: <><path d="M3 0h6v12H3z" fill="#dfe3e6" /><path d="M9 2H6M9 4H7M9 6H6M9 8H7M9 10H6" stroke="#3b4453" /></>,
  props: <><rect x="1" y="0" width="10" height="12" stroke={L} /><path d="M1 2.500h10M3 5h1M3 7h1M3 9h1M5 5h4M5 7h4M5 9h4" stroke={L} /></>,
  lockui: <><path d="M6 9H0V1h12v4M0 3h12" stroke={L} /><path d="M7 8h5v4H7z" fill={L} /><path d="M8 8V6h3v2" stroke={L} /></>,
  iso2: <><rect x="0" y="0" width="4" height="4" stroke={L} /><circle cx="9.500" cy="4" r="2.500" stroke={L} /><path d="M5 7l3 5H2z" stroke={L} /></>,
  perf: <><circle cx="6" cy="6" r="5.500" fill="#8db8e4" stroke="#fff" /><path d="M4 8l4-4" stroke="#fff" strokeWidth="1.500" /></>,
  img: <><rect x="0" y="1" width="12" height="10" fill="#e4e4dc" /><path d="M1 3l4 4 3-3 3 3" stroke="#555" /><path d="M9 6l3 6H6z" fill="#e68a5c" /></>,
  cloud: <><circle cx="7" cy="3" r="5" fill="#347fd0" /><path d="M2 3h10M7-2v10" stroke="#8fc0ee" strokeWidth=".8" /><path d="M-2 7h7v6h-7z" fill="#f0b13a" /><path d="M5 9l3 3 6-6" stroke="#4cc15c" strokeWidth="2" /></>,
  full: <><rect x="0" y="1" width="12" height="10" stroke={L} /><path d="M2 9l3-3M7 6l3-3M2 6.500V9h2.500M7.500 3H10v2.500" stroke={L} /></>,
};
const groups = [
  [["grid", 17], ["dots", 17], ["^", 12]],
  [["infer", 17], ["dyn", 17, 1], ["", 1], ["ortho", 17, 1], ["polar", 17], ["^", 10]],
  [["iso", 17], ["^", 10]],
  [["track", 17], ["snap", 17, 1], ["^", 11], ["lwt", 18], ["checker", 17, 1], ["cycle", 19]],
  [["box3", 18], ["^", 10]],
  [["ucs", 17], ["filt", 18], ["^", 10], ["gizmo", 17, 1], ["^", 12]],
  [["ann1", 17, 1], ["ann2", 18], ["ann3", 17], ["1:1 / 100%", 41], ["^", 10]],
  [["gear", 17], ["^", 12], ["plus", 18]],
  [["ruler", 16], ["Decimal", 42], ["^", 10]],
  [["props", 17]],
  [["lockui", 17], ["^", 11]],
  [["iso2", 18], ["", 1], ["perf", 17, 1], ["", 1]],
  [["img", 19], ["cloud", 19], ["img", 19]],
  [["full", 18], ["menu", 17]],
];

function StatusBar() {
  return (
    <Status>
      <LayoutTabs>
        <MenuBtn type="button" aria-label="Layout menu"><Lines /></MenuBtn>
        <LayoutTab type="button" $w={41} $on>Model</LayoutTab>
        <LayoutTab type="button" $w={45}>Layout1</LayoutTab><Slash />
        <LayoutTab type="button" $w={46}>Layout2</LayoutTab><Slash />
        <LayoutTab type="button" $w={31} aria-label="New layout"><Glyph s={10}>{st.plus}</Glyph></LayoutTab><Slash />
      </LayoutTabs>
      <StatusGroup><Coordinates type="button" $w={149}>334529.6986, 429624.1758, 0.0000</Coordinates></StatusGroup>
      <StatusGroup><StatusBtn type="button" $w={35}>MODEL</StatusBtn></StatusGroup>
      {groups.map((g, i) => (
        <StatusGroup key={i}>
          {g.map(([k, w, on], j) => (
            <StatusBtn key={j} as={k ? "button" : "span"} type={k ? "button" : undefined} $w={w} $on={on} aria-label={k || undefined}>
              {k === "^" ? <Caret /> : k === "menu" ? <Lines /> : st[k] ? <Glyph s={11}>{st[k]}</Glyph> : k}
            </StatusBtn>
          ))}
        </StatusGroup>
      ))}
    </Status>
  );
}

/* ---------- palette contents ---------- */
const TextRow = ({ id, label, value }) => (
  <Row><RowLabel htmlFor={id}>{label}</RowLabel><Field id={id} defaultValue={value} /></Row>
);

function ColumnForm() {
  return (
    <Form onSubmit={(e) => e.preventDefault()}>
      <Group $h={94}>
        <Legend>Column List Manager</Legend>
        <List>
          <ListItems>
            {["COLUMN C1 (500x700)", "COLUMN C2 (800x500)", "COLUMN C3 (500x500)", "COLUMN C4 (700x400)"].map((t, i) => (
              <ListItem key={t} $on={i === 0}><Check type="checkbox" defaultChecked={i === 0} />{t}</ListItem>
            ))}
          </ListItems>
          <ScrollTrack $top={12} $bottom={21} />
        </List>
        <ButtonRow>
          <Action type="button" $w={47} $bg={c.blue}>ADD / SAV</Action>
          <Action type="button" $w={48}>UPDATE</Action>
          <Action type="button" $w={38} $bg="#b7353b">DELETE</Action>
        </ButtonRow>
      </Group>
      <Group $h={76}>
        <Legend>Settings (Layers&nbsp; Styles)</Legend>
        <Row><RowLabel htmlFor="dim">Dim Style:</RowLabel><Choice id="dim"><option>CAMBO DIM 1-20</option></Choice></Row>
        <Row><RowLabel htmlFor="txt">Text Style:</RowLabel><Choice id="txt"><option>Standard</option></Choice></Row>
        <TextRow id="lc" label="Layer Conc:" value="" />
        <TextRow id="ls" label="Layer Steel:" value="" />
      </Group>
      <Group $h={94}>
        <Legend>General Inform</Legend>
        <TextRow id="name" label="Column Nam" value="COLUMN C1" />
        <TextRow id="qty" label="Quantity (QT):" value="5" />
        <ButtonRow>
          <Action type="button" $w={57}>Add Tie (4 pt</Action>
          <Action type="button" $w={57}>Add Pin (2 pt</Action>
          <Action type="button" $w={38}>Clear La</Action>
        </ButtonRow>
        <Ready>Ready.</Ready>
      </Group>
      <Group $h={80}>
        <Legend>Levels&nbsp; Elevation</Legend>
        <TextRow id="tl" label="Top Level:" value="1ST FLOOR" />
        <TextRow id="te" label="Top EL:" value="+4.5" />
        <TextRow id="bl" label="Base Level:" value="GROUND FLOOR" />
        <TextRow id="be" label="Base EL:" value="±0.00" />
      </Group>
      <Group $h={66}>
        <Legend>Dimensions (mm)</Legend>
        <TextRow id="w" label="Width (X):" value="500" />
        <TextRow id="d" label="Depth (Y):" value="700" />
        <TextRow id="cv" label="Cover:" value="40" />
      </Group>
      <Group $h={80}>
        <Legend>Reinforcement&nbsp; Table</Legend>
        <TextRow id="mb" label="Main&nbsp; Bar (Dia" value="24" />
        <Row>
          <RowLabel htmlFor="cx">Count X / Y:</RowLabel>
          <Counts><Count id="cx" $w={39} $pad={12} defaultValue="5" /><Count aria-label="Count Y" $w={29} $pad={2} defaultValue="6" /></Counts>
        </Row>
        <TextRow id="se" label="Stirrup (Ext):" value="DB10,@150" />
        <TextRow id="sm" label="Stirrup (Mid):" value="DB10,@150" />
      </Group>
    </Form>
  );
}

const bars = [];
const barX = [598, 654.5, 711.5, 768, 825];
[143.5, 213, 282, 351.5, 420.5, 490].forEach((y, i, all) =>
  (i === 0 || i === all.length - 1 ? barX : [barX[0], barX[4]]).forEach((x) => bars.push([x, y]))
);

function Section() {
  return (
    <SectionSvg width="100%" height="100%" viewBox="457 89 508 453" fill="none" aria-label="Column section">
      <rect x="562" y="107.500" width="298.500" height="417.500" stroke="#e6e6e6" strokeWidth="1.200" />
      <rect x="586" y="131.500" width="250.500" height="370" rx="13" stroke="#c9c48a" strokeDasharray="2 1" />
      <rect x="588" y="203" width="246" height="228" rx="12" stroke="#3f9a3a" strokeDasharray="2 1" />
      <rect x="644.500" y="133.500" width="133.500" height="366" rx="12" stroke="#3f9a3a" strokeDasharray="2 1" />
      {bars.map(([x, y]) => <circle key={`${x}-${y}`} cx={x} cy={y} r="7.200" fill="#ee0000" />)}
      <g fill="#45d6d6" fontFamily="Liberation Sans, sans-serif" fontSize="9">
        <text x="713" y="107" textAnchor="middle">500</text>
        <text x="864" y="321">700</text>
      </g>
    </SectionSvg>
  );
}

function ColumnPalette() {
  return (
    <Palette>
      <PaletteStrip>
        <StripBtn type="button" aria-label="Close palette"><Glyph s={7}><path d="M1 1l10 10M11 1L1 11" stroke="#fff" strokeWidth="3" /></Glyph></StripBtn>
        <StripBtn type="button" aria-label="Auto-hide"><Glyph s={7}><path d="M1 0v12M11 0v12" stroke="#fff" strokeWidth="2" /><path d="M11 1v10L4 6z" fill="#fff" /></Glyph></StripBtn>
        <StripBtn type="button" aria-label="Properties"><Glyph s={8}>{st.gear}</Glyph></StripBtn>
        <PaletteName>CAMBO CAD – COLUMN TYPICAL</PaletteName>
        <StripBtn as="span"><Logo s={10} /></StripBtn>
      </PaletteStrip>
      <PaletteBody>
        <Columns>
          <ColumnForm />
          <ScrollTrack $top={25} $bottom={59} />
          <Preview>
            <PreviewTitle>PREVIEW (Graphic View)</PreviewTitle>
            <PreviewCanvas><Section /></PreviewCanvas>
          </Preview>
        </Columns>
        <Insert type="button">
          <Glyph s={9}><path d="M0 1l12 5-12 5 3-5z" fill="#fff" /></Glyph>INSERT TABLE DETAIL
        </Insert>
        <Options role="listbox" aria-label="Text styles">
          <Option role="option">{"{18b73a54-fa43-428c-adcb-c1c7bbdf2c84}"}</Option>
          <Option role="option">Annotative</Option>
          <Option role="option" $on aria-selected="true">Bahnschrift</Option>
          <Option role="option">Standard</Option>
        </Options>
        <Pointer width="9" height="13" viewBox="0 0 9 13"><path d="M.5.500v10l2.500-2 1.500 3.500 1.800-.8L4.800 8H8z" fill="#fff" stroke="#333" strokeWidth=".5" /></Pointer>
      </PaletteBody>
    </Palette>
  );
}

export default function App() {
  return (
    <Page>
      <Global />
      <TopBar />
      <RibbonArea />
      <Workspace />
      <StatusBar />
      <ColumnPalette />
    </Page>
  );
}
